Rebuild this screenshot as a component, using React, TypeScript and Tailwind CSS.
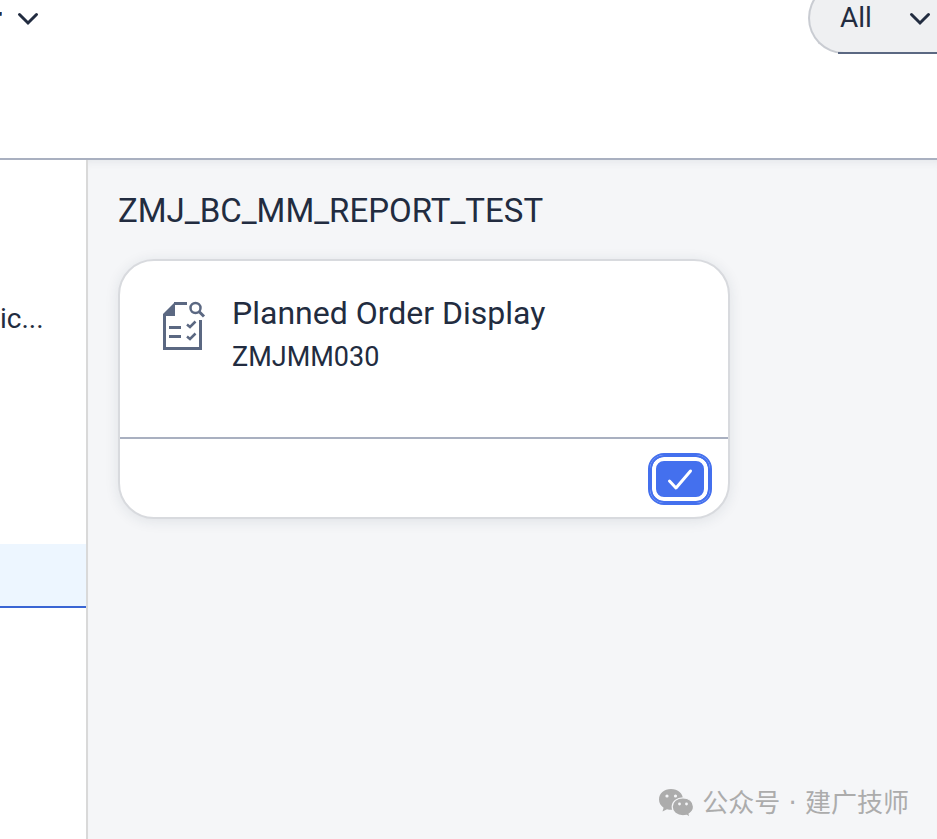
import { FC } from "react";

interface NavRow {
  id: number;
  label: string;
  selected?: boolean;
}

const navRows: NavRow[] = [
  { id: 1, label: "" },
  { id: 2, label: "" },
  { id: 3, label: "ic..." },
  { id: 4, label: "" },
  { id: 5, label: "" },
  { id: 6, label: "" },
  { id: 7, label: "", selected: true },
];

const Chevron: FC = () => (
  <svg width="24" height="16" viewBox="0 0 24 16" fill="none" className="shrink-0" aria-hidden="true">
    <path d="M3.500 4.500 12 13l8.500-8.500" stroke="#222c40" strokeWidth="3" strokeLinecap="round" />
  </svg>
);

const OrderIcon: FC = () => (
  <svg width="44" height="50" viewBox="0 0 44 50" fill="none" className="shrink-0" aria-hidden="true">
    <path d="M1 13 13 1v14H1z" fill="#5b6882" />
    <path d="M12 2.500h13M2.500 13v34.500H38.500V19" stroke="#5b6882" strokeWidth="3" />
    <path d="M7 26.500h12M7 35.500h12" stroke="#5b6882" strokeWidth="3" />
    <path d="m25 23.500 3 2.500 5.500-5.500M25 35.500l3 2.500 5.500-5.500" stroke="#5b6882" strokeWidth="2.500" />
    <circle cx="33.500" cy="7" r="5" stroke="#5b6882" strokeWidth="2.500" />
    <path d="m37 10.500 5 5" stroke="#5b6882" strokeWidth="3" />
  </svg>
);

const WechatIcon: FC = () => (
  <svg width="36" height="30" viewBox="0 0 36 30" className="shrink-0" aria-hidden="true">
    <path
      d="M13 1C6 1 1 5.500 1 11.500c0 3.500 1.800 6.300 4.600 8.200L4.500 23.500l4.500-2.300c1.400.4 2.800.6 4.500.6C20 21.800 25 17.500 25 11.500S20 1 13 1z"
      fill="#acacac"
    />
    <path
      d="M25 9.800c-6.200 0-10.800 3.900-10.800 9s4.600 9 10.800 9c1.300 0 2.500-.2 3.600-.5l3.400 1.900-.9-3.200c2.700-1.600 4.400-4.200 4.400-7.200 0-5.100-4.500-9-10.500-9z"
      fill="#acacac"
      stroke="#f5f6f8"
      strokeWidth="1.200"
    />
    <g fill="#f5f6f8">
      <circle cx="9" cy="8" r="1.600" />
      <circle cx="17.500" cy="8" r="1.600" />
      <circle cx="21.500" cy="16" r="1.400" />
      <circle cx="28.500" cy="16" r="1.400" />
    </g>
  </svg>
);

const Header: FC = () => (
  <header className="flex h-40 items-start justify-between border-b-2 border-[#a9b0c0] bg-white">
    <button type="button" className="flex h-9 items-center gap-3.5" aria-label="Open menu">
      <span className="flex w-0.5 justify-end overflow-hidden text-[28px] font-bold">r</span>
      <Chevron />
    </button>
    <button
      type="button"
      className="relative -mt-[18px] flex h-[72px] w-[129px] items-center justify-between rounded-l-full border-2 border-r-0 border-[#c9ccd2] bg-[#eff0f2] pl-[30px] pr-[5px]"
    >
      <span className="text-[28px] leading-9">All</span>
      <Chevron />
      <span className="absolute -bottom-0.5 left-7 right-0 h-0.5 bg-[#5b6882]" />
    </button>
  </header>
);

const Sidebar: FC = () => (
  <nav className="w-[88px] shrink-0 border-r-2 border-[#d9d9d9] bg-white">
    {navRows.map((row) => (
      <a
        key={row.id}
        href="#"
        aria-label={row.label || `Item ${row.id}`}
        className={`flex h-16 items-center border-b-2 text-[28px] ${
          row.selected ? "border-[#3a66d4] bg-[#edf6ff]" : "border-transparent"
        }`}
      >
        {row.label}
      </a>
    ))}
  </nav>
);

const ReportCard: FC = () => (
  <article className="max-w-[612px] rounded-[36px] border-2 border-[#d8dade] bg-white shadow-[0_2px_14px_rgba(34,53,72,0.10)]">
    <div className="flex h-[178px] items-start gap-[26px] border-b-2 border-[#a9b0c0] px-[42px] pt-8">
      <span className="pt-2">
        <OrderIcon />
      </span>
      <div>
        <h3 className="text-[32px] leading-10">Planned Order Display</h3>
        <p className="text-[27px] leading-[48px]">ZMJMM030</p>
      </div>
    </div>
    <div className="flex h-[78px] items-center justify-end px-[18px] pt-0.5">
      <button
        type="button"
        aria-label="Confirm"
        className="flex h-12 w-[60px] items-center justify-center rounded-[14px] border-2 border-[#4470ee] bg-[#4470ee] shadow-[inset_0_0_0_4px_#ffffff] outline-2 outline-[#4470ee]"
      >
        <svg width="28" height="24" viewBox="0 0 28 24" fill="none" className="shrink-0" aria-hidden="true">
          <path d="m3.500 14 6.500 7L24.500 4" stroke="#ffffff" strokeWidth="3" strokeLinecap="round" strokeLinejoin="round" />
        </svg>
      </button>
    </div>
  </article>
);

const App: FC = () => (
  <div className="relative flex min-h-screen flex-col overflow-hidden bg-[#f5f6f8] font-['Roboto','Noto_Sans_CJK_SC',sans-serif] text-[#222c40]">
    <Header />
    <div className="flex flex-1">
      <Sidebar />
      <main className="flex-1 px-[30px] pt-[29px] shadow-[inset_0_8px_8px_-6px_rgba(34,53,72,0.08)]">
        <h2 className="mb-[26px] text-[33px] leading-[44px]">ZMJ_BC_MM_REPORT_TEST</h2>
        <ReportCard />
      </main>
    </div>
    <div className="absolute bottom-[18px] right-7 flex items-center gap-2 text-[#acacac]">
      <WechatIcon />
      <span className="font-['DejaVu_Sans','Noto_Sans_CJK_SC',sans-serif] text-[26px] leading-9">公众号 · 建广技师</span>
    </div>
  </div>
);

export default App;
